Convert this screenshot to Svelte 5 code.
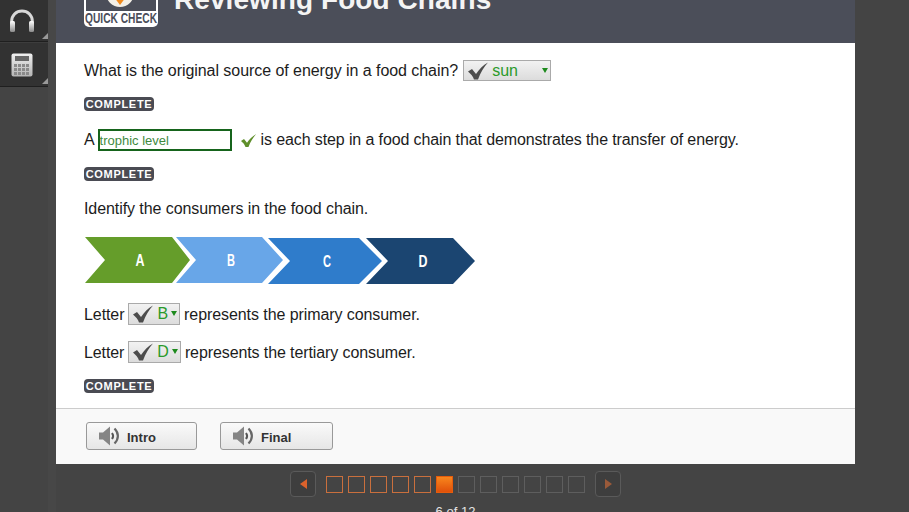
<script lang="ts">
  const chevrons = [
    { label: 'A', color: '#659d2a', points: '85,237 172,237 190,260 172,283 85,283 105,260', x: 140, y: 266, w: 9 },
    { label: 'B', color: '#68a6e8', points: '176,237 262,237 283,260 262,283 176,283 196,260', x: 231, y: 266, w: 8 },
    { label: 'C', color: '#2f7ccb', points: '268,238 359,238 382,261 359,284 268,284 290,261', x: 327, y: 267, w: 8 },
    { label: 'D', color: '#1b4571', points: '366,238 453,238 475,261 453,284 366,284 388,261', x: 423, y: 267, w: 9 },
  ];

  const pages = Array.from({ length: 12 }, (_, i) => i + 1);
  const current = 6;
  const tickPath = 'M0 9.500 L4 7 L8 12 C11 7.500 15 3 20 0.500 C16 5 12.500 10.500 10 17.500 L6 17.500 C5 14.500 3 12 0 9.500 Z';
</script>

{#snippet tick()}
  <svg class="tick" width="20" height="18" viewBox="0 0 20 18">
    <path d={tickPath} fill="#4c4c4c" />
  </svg>
{/snippet}

{#snippet badge()}
  <div class="badge">COMPLETE</div>
{/snippet}

{#snippet speaker()}
  <svg width="22" height="20" viewBox="0 0 22 20">
    <path d="M1 6.500 H5 L12 0.500 V19.500 L5 13.500 H1 Z" fill="#858585" />
    <path d="M14 7 C15.500 9 15.500 11 14 13" fill="none" stroke="#555" stroke-width="2" />
    <path d="M16.500 2.500 C21 7 21 13 16.500 17.500" fill="none" stroke="#666" stroke-width="2.200" />
  </svg>
{/snippet}

<div class="page">
  <aside class="sidebar">
    <div class="tool first">
      <svg width="28" height="24" viewBox="0 0 28 24">
        <defs>
          <linearGradient id="cup" x1="0" y1="0" x2="0" y2="1">
            <stop offset="0" stop-color="#fff" />
            <stop offset="1" stop-color="#8a8a8a" />
          </linearGradient>
        </defs>
        <path d="M3.500 17 V13 C3.500 6 8.500 2 14 2 C19.500 2 24.500 6 24.500 13 V17" fill="none" stroke="#d8d8d8" stroke-width="2.800" />
        <rect x="2" y="12" width="5" height="11" rx="1.500" fill="url(#cup)" />
        <rect x="21" y="12" width="5" height="11" rx="1.500" fill="url(#cup)" />
      </svg>
    </div>
    <div class="tool second">
      <svg width="22" height="24" viewBox="0 0 22 24">
        <defs>
          <linearGradient id="calc" x1="0" y1="0" x2="0" y2="1">
            <stop offset="0" stop-color="#f0f0f0" />
            <stop offset="1" stop-color="#b4b4b4" />
          </linearGradient>
        </defs>
        <rect x="0.500" y="0.500" width="21" height="23" rx="2" fill="url(#calc)" />
        <rect x="4" y="3" width="14" height="5" fill="#666" />
        {#each [11, 15, 19] as y}
          {#each [3, 7, 11, 15] as x}
            <rect {x} {y} width="3" height="3" fill="#8a8a8a" />
          {/each}
        {/each}
      </svg>
    </div>
  </aside>

  <div class="center">
    <main class="card">
      <header class="header">
        <div class="logo">
          <div class="logo-panel"><span class="gem"></span></div>
          <svg class="logo-text" width="72" height="14" viewBox="0 0 72 14">
            <text x="0" y="11" textLength="72" lengthAdjust="spacingAndGlyphs">QUICK CHECK</text>
          </svg>
        </div>
        <h1>Reviewing Food Chains</h1>
      </header>

      <section class="content">
        <div class="row first-row">
          What is the original source of energy in a food chain?
          <span class="select wide">
            {@render tick()}
            <span class="value">sun</span>
            <span class="arrow"></span>
          </span>
        </div>
        {@render badge()}

        <div class="row blank-row">
          <span>A</span>
          <span class="blank">trophic level</span>
          <svg class="green-check" width="15" height="15" viewBox="0 0 20 18">
            <path d={tickPath} fill="#5f8f2b" />
          </svg>
          <span class="after-check">is each step in a food chain that demonstrates the transfer of energy.</span>
        </div>
        {@render badge()}

        <p class="prompt">Identify the consumers in the food chain.</p>

        <svg class="chain" width="392" height="48" viewBox="84 237 392 48">
          {#each chevrons as c}
            <polygon points={c.points} fill={c.color} />
            <text x={c.x} y={c.y} text-anchor="middle" textLength={c.w} lengthAdjust="spacingAndGlyphs">{c.label}</text>
          {/each}
        </svg>

        <div class="row letter-one">
          Letter
          <span class="select small">
            {@render tick()}
            <span class="value">B</span>
            <span class="arrow"></span>
          </span>
          represents the primary consumer.
        </div>
        <div class="row letter-two">
          Letter
          <span class="select small">
            {@render tick()}
            <span class="value">D</span>
            <span class="arrow"></span>
          </span>
          represents the tertiary consumer.
        </div>
        <div class="last-badge">{@render badge()}</div>
      </section>

      <footer class="footer">
        <button class="audio intro">{@render speaker()} <span>Intro</span></button>
        <button class="audio final">{@render speaker()} <span>Final</span></button>
      </footer>
    </main>

    <nav class="pager">
      <button class="nav-btn" aria-label="Previous"><span class="tri left"></span></button>
      <div class="squares">
        {#each pages as p}
          <span class="square" class:done={p < current} class:active={p === current}></span>
        {/each}
      </div>
      <button class="nav-btn" aria-label="Next"><span class="tri right"></span></button>
    </nav>
    <div class="count">6 of 12</div>
  </div>
</div>

<style>
  :global(body) {
    margin: 0;
    background: #444;
    overflow: hidden;
  }

  .page {
    display: flex;
    width: 909px;
    height: 512px;
    overflow: hidden;
    background: #444;
    font-family: 'Liberation Sans', Arial, sans-serif;
    color: #1c1c1c;
  }

  .sidebar {
    width: 56px;
    flex-shrink: 0;
    box-sizing: border-box;
    padding-right: 8px;
    background: linear-gradient(to right, #444 48px, #474747 48px);
  }

  .tool {
    position: relative;
    display: flex;
    align-items: center;
    justify-content: center;
    padding-right: 4px;
    background: #323232;
    border-bottom: 1px solid #1f1f1f;
    box-sizing: border-box;
  }

  .tool::after {
    content: '';
    position: absolute;
    right: 0;
    bottom: 2px;
    border-left: 6px solid transparent;
    border-bottom: 6px solid #999;
  }

  .first {
    height: 42px;
  }

  .second {
    height: 45px;
    border-top: 1px solid #3d3d3d;
  }

  .center {
    width: 799px;
    flex-shrink: 0;
  }

  .card {
    background: #fff;
    height: 464px;
    display: flex;
    flex-direction: column;
  }

  .header {
    height: 43px;
    background: #4b4e59;
    display: flex;
    align-items: flex-end;
    gap: 16px;
    padding-left: 28px;
    overflow: hidden;
    flex-shrink: 0;
  }

  .logo {
    width: 74px;
    height: 60px;
    margin-bottom: 16px;
    flex-shrink: 0;
    background: #fff;
    border-radius: 0 0 5px 5px;
    display: flex;
    flex-direction: column;
    align-items: center;
  }

  .logo-panel {
    width: 70px;
    height: 44px;
    flex-shrink: 0;
    background: #4b4e59;
    position: relative;
    overflow: hidden;
  }

  .gem {
    position: absolute;
    left: 20px;
    top: 12px;
    width: 28px;
    height: 28px;
    border-radius: 50%;
    background: #f3efe6;
  }

  .gem::after {
    content: '';
    position: absolute;
    left: 8px;
    top: 18px;
    border-left: 6px solid transparent;
    border-right: 6px solid transparent;
    border-top: 8px solid #f08a1d;
  }

  .logo-text {
    display: block;
    margin-top: 1px;
    overflow: visible;
  }

  .logo-text text {
    font-size: 14px;
    font-weight: 700;
    fill: #4b4e59;
  }

  h1 {
    margin: 0 0 28px;
    font-size: 28px;
    line-height: 30px;
    font-weight: 700;
    letter-spacing: 0.07px;
    color: #f4f4f4;
    white-space: nowrap;
  }

  .content {
    flex: 1;
    padding: 17px 28px 0;
  }

  .row {
    display: flex;
    align-items: center;
    height: 22px;
    font-size: 16px;
    letter-spacing: -0.08px;
    white-space: nowrap;
    gap: 4px;
  }

  .first-row {
    height: 21px;
    letter-spacing: -0.055px;
  }

  .blank-row {
    margin-top: 18px;
    letter-spacing: -0.115px;
  }

  .letter-one {
    margin-top: 19px;
  }

  .letter-two {
    margin-top: 16px;
    letter-spacing: -0.1px;
  }

  .badge {
    width: 70px;
    height: 14px;
    margin-top: 16px;
    border-radius: 4px;
    background: #4a4b53;
    color: #fff;
    font-size: 11px;
    font-weight: 700;
    line-height: 14px;
    letter-spacing: 0.7px;
    text-align: center;
    white-space: nowrap;
  }

  .last-badge {
    margin-top: -1px;
  }

  .select {
    display: inline-flex;
    align-items: center;
    box-sizing: border-box;
    height: 21px;
    border: 1px solid #aaa;
    background: linear-gradient(#f2f2f2, #dcdcdc);
    position: relative;
    padding-left: 4px;
    color: #2a9a2a;
    letter-spacing: 0;
  }

  .wide {
    width: 88px;
    margin-left: 1px;
  }

  .small {
    height: 22px;
    margin-top: -2px;
    padding-right: 11px;
  }

  .value {
    margin-left: 4px;
  }

  .arrow {
    position: absolute;
    right: 2px;
    top: 7px;
    border-left: 3px solid transparent;
    border-right: 3px solid transparent;
    border-top: 5px solid #1d8a1d;
  }

  .blank {
    box-sizing: border-box;
    width: 134px;
    height: 22px;
    border: 2px solid #16641c;
    color: #3f8a3f;
    font-size: 13px;
    letter-spacing: 0;
    line-height: 19px;
    margin-left: -1px;
  }

  .green-check {
    margin-left: 5px;
    flex-shrink: 0;
  }

  .after-check {
    margin-left: 1px;
  }

  .prompt {
    margin: 18px 0 0;
    height: 19px;
    font-size: 16px;
    line-height: 20px;
    letter-spacing: -0.075px;
  }

  .chain {
    display: block;
    margin-top: 19px;
  }

  .chain text {
    font-size: 16px;
    font-weight: 700;
    fill: #fff;
  }

  .footer {
    height: 56px;
    box-sizing: border-box;
    border-top: 1px solid #ccc;
    background: #f9f9f9;
    flex-shrink: 0;
    display: flex;
    align-items: flex-start;
    padding: 13px 0 0 30px;
    gap: 23px;
  }

  .audio {
    display: flex;
    align-items: center;
    gap: 7px;
    height: 28px;
    box-sizing: border-box;
    padding: 0 0 0 11px;
    border: 1px solid #999;
    border-radius: 3px;
    background: linear-gradient(#fafafa, #e6e6e6);
    font-family: inherit;
    font-size: 13px;
    font-weight: 700;
    color: #333;
  }

  .audio span {
    padding-top: 2px;
  }

  .intro {
    width: 111px;
  }

  .final {
    width: 113px;
  }

  .pager {
    display: flex;
    justify-content: center;
    align-items: center;
    gap: 10px;
    margin-top: 7px;
    height: 26px;
  }

  .nav-btn {
    width: 26px;
    height: 26px;
    padding: 0;
    border: 1px solid #5a5a5a;
    border-radius: 4px;
    background: #3e3e3e;
    display: flex;
    align-items: center;
    justify-content: center;
  }

  .tri {
    display: block;
    border-top: 5px solid transparent;
    border-bottom: 5px solid transparent;
  }

  .left {
    border-right: 7px solid #db622c;
  }

  .right {
    border-left: 7px solid #9a5a3a;
  }

  .squares {
    display: flex;
    gap: 5px;
  }

  .square {
    box-sizing: border-box;
    width: 17px;
    height: 17px;
    border: 1px solid #5e5e5e;
  }

  .done {
    border-color: #c96f3d;
  }

  .active {
    border-color: #e65c0c;
    background: linear-gradient(#f8861d, #e0500a);
  }

  .count {
    margin-top: 7px;
    text-align: center;
    font-size: 13px;
    line-height: 15px;
    color: #e6e6e6;
  }
</style>
